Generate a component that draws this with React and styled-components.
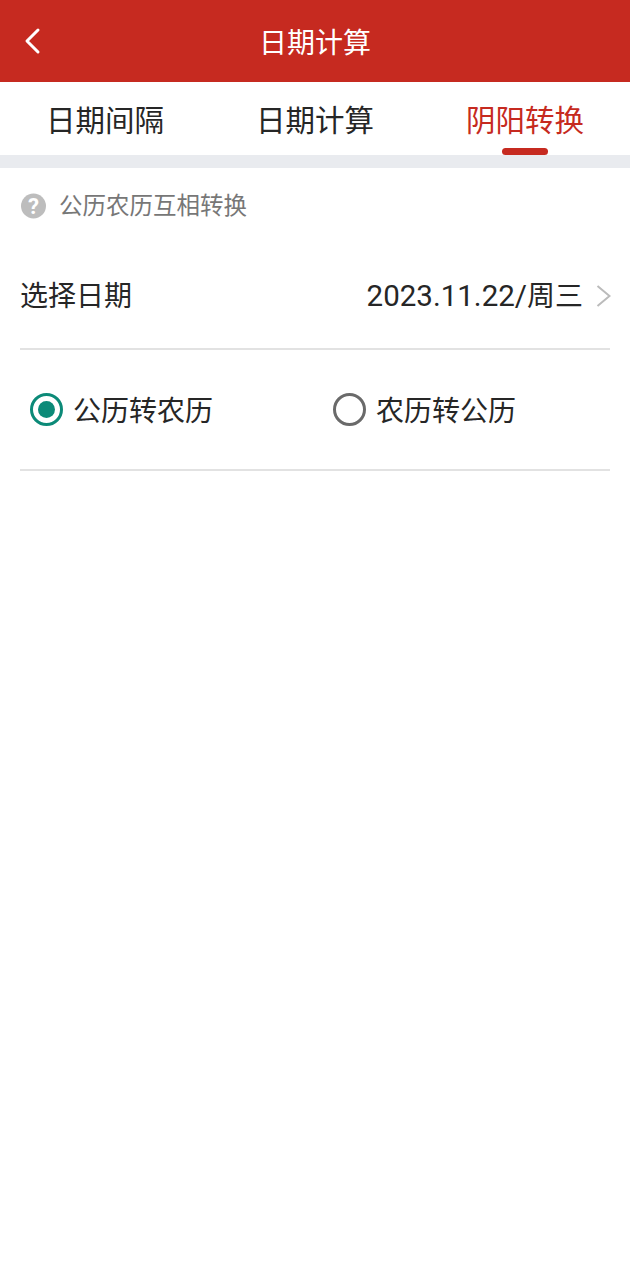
import React from "react";
import styled, { createGlobalStyle } from "styled-components";

const Global = createGlobalStyle`
  html, body { margin: 0; padding: 0; background: #fff; }
  body { font-family: "Roboto", "Noto Sans CJK SC", sans-serif; }
`;
const Page = styled.div`width: 630px; height: 1280px; background: #fff; display: flex; flex-direction: column; overflow: hidden;`;
const Header = styled.header`
  height: 82px; box-sizing: border-box; padding-top: 5px; background: #c62a20; display: flex; align-items: center; justify-content: center; position: relative;
`;
const Back = styled.svg`position: absolute; left: 22px; top: 27px; width: 22px; height: 28px;`;
const Title = styled.h1`margin: 0; color: #fff; font-size: 28px; font-weight: 400; line-height: 1;`;
const Tabs = styled.nav`height: 73px; display: flex; align-items: center; justify-content: space-between; padding: 0 46px;`;
const Tab = styled.div`
  font-size: 29.5px; line-height: 1; color: ${p => p.$active ? "#c62a20" : "#262626"}; position: relative; height: 73px; box-sizing: border-box; padding-top: 6px; display: flex; align-items: center;
  ${p => p.$active && `&::after { content: ""; position: absolute; left: 36px; bottom: 0; width: 46px; height: 7px; border-radius: 3.5px; background: #c62a20; }`}
`;
const Band = styled.div`height: 13px; background: #e9ebef;`;
const Hint = styled.div`display: flex; align-items: center; gap: 13px; padding: 0 20px 0 21px; height: 75px; color: #777; font-size: 23.5px; line-height: 1;`;
const HintIcon = styled.svg`width: 25px; height: 26px; flex: none;`;
const HintText = styled.span`padding-top: 2px;`;
const DateRow = styled.div`height: 107px; margin: 0 20px; border-bottom: 2px solid #e2e2e2; display: flex; align-items: center; justify-content: space-between; color: #262626; font-size: 28px; line-height: 1; box-sizing: border-box;`;
const DateLabel = styled.span`padding-top: 3px;`;
const DateValue = styled.div`display: flex; align-items: center; gap: 13px; margin-right: -1px;`;
const DateNumber = styled.span`font-size: 29.5px;`;
const Chevron = styled.svg`width: 15px; height: 24px;`;
const RadioRow = styled.div`height: 121px; margin: 0 20px; border-bottom: 2px solid #e2e2e2; display: flex; align-items: center; box-sizing: border-box;`;
const RadioItem = styled.label`display: flex; flex: none; align-items: center; gap: 10px; width: 303px; padding-left: 10px; box-sizing: border-box; font-size: 28px; line-height: 1; color: #262626;`;
const RadioText = styled.span`padding-top: 4px;`;
const RadioMark = styled.span`
  width: 33px; height: 33px; flex: none; border-radius: 50%; box-sizing: border-box; border: 3.5px solid ${p => p.$on ? "#0c8a78" : "#6a6a6a"};
  display: flex; align-items: center; justify-content: center;
  ${p => p.$on && `&::after { content: ""; width: 17px; height: 17px; border-radius: 50%; background: #0c8a78; }`}
`;

export default function App() {
  return (
    <Page>
      <Global />
      <Header>
        <Back viewBox="0 0 22 28" fill="none" stroke="#fff" strokeWidth="3" strokeLinecap="round" strokeLinejoin="round"><path d="M16 3 L5 14 L16 25" /></Back>
        <Title>日期计算</Title>
      </Header>
      <Tabs>
        <Tab>日期间隔</Tab>
        <Tab>日期计算</Tab>
        <Tab $active>阴阳转换</Tab>
      </Tabs>
      <Band />
      <Hint>
        <HintIcon viewBox="0 0 26 26"><circle cx="13" cy="13" r="13" fill="#bdbdbd" /><text x="13" y="21" textAnchor="middle" fontSize="23" fontWeight="700" fill="#fff" fontFamily="Roboto">?</text></HintIcon>
        <HintText>公历农历互相转换</HintText>
      </Hint>
      <DateRow>
        <DateLabel>选择日期</DateLabel>
        <DateValue><DateLabel><DateNumber>2023.11.22/</DateNumber>周三</DateLabel><Chevron viewBox="0 0 15 24" fill="none" stroke="#bbb" strokeWidth="2"><path d="M1.5 2 L13.5 12 L1.5 22" /></Chevron></DateValue>
      </DateRow>
      <RadioRow>
        <RadioItem><RadioMark $on /><RadioText>公历转农历</RadioText></RadioItem>
        <RadioItem><RadioMark /><RadioText>农历转公历</RadioText></RadioItem>
      </RadioRow>
    </Page>
  );
}
